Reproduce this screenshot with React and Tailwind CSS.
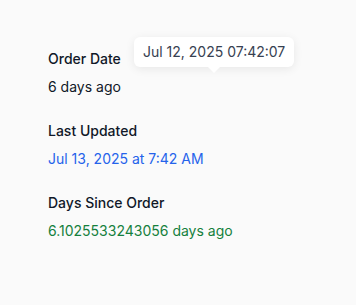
import React from 'react';

function Field({ label, value, valueClass, children }) {
    return (
        <div className="relative">
            <p className="text-sm leading-5 font-medium text-gray-900">{label}</p>
            <p className={`mt-2 text-sm leading-5 ${valueClass}`}>{value}</p>
            {children}
        </div>
    );
}

export default function App() {
    return (
        <div
            className="min-h-screen w-full bg-[#fafafa] pl-12 pt-[49px]"
            style={{ fontFamily: 'Inter, "Noto Sans", sans-serif' }}
        >
            <div className="flex flex-col gap-6">
                <Field label="Order Date" value="6 days ago" valueClass="text-[#111827]">
                    {/* 툴팁 */}
                    <div className="absolute left-[86px] top-[-12px] rounded-md bg-white px-[9px] py-[5px] text-sm leading-5 text-[#374151] shadow-[0_2px_10px_rgba(0,0,0,0.08)]">
                        Jul 12, 2025 07:42:07
                        <span className="absolute left-1/2 top-full -translate-x-1/2 h-0 w-0 border-x-[6px] border-t-[6px] border-x-transparent border-t-white" />
                    </div>
                </Field>
                <Field
                    label="Last Updated"
                    value="Jul 13, 2025 at 7:42 AM"
                    valueClass="text-[#2563eb]"
                />
                <Field
                    label="Days Since Order"
                    value="6.1025533243056 days ago"
                    valueClass="text-[#15803d]"
                />
            </div>
        </div>
    );
}
